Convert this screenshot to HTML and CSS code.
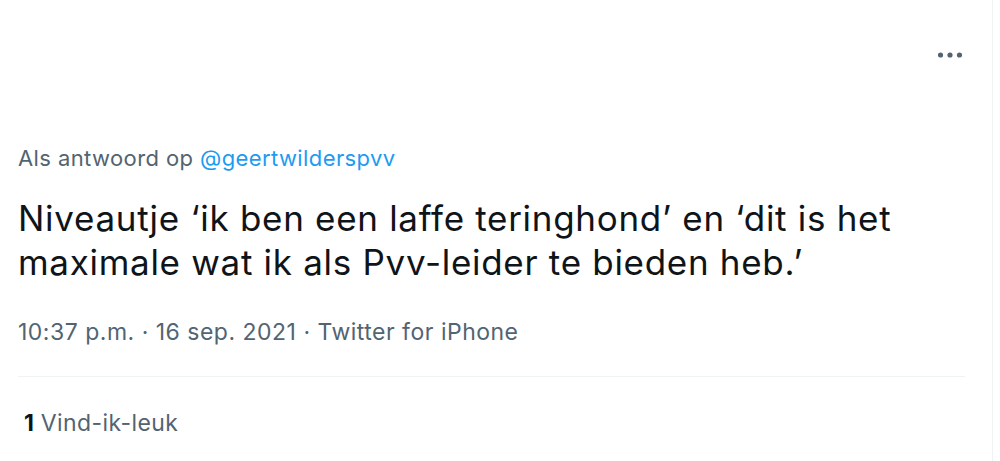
FILE: index.html
```html
<!DOCTYPE html>
<html>
<head>
<meta charset="utf-8">
<link rel="stylesheet" href="styles.css">
</head>
<body>
<div class="page">
  <div class="tweet">
    <div class="top">
      <div class="more" aria-label="Meer">
        <svg width="24" height="10" viewBox="0 0 24 10"><circle cx="2.5" cy="5" r="2.6" fill="#536471"/><circle cx="12" cy="5" r="2.6" fill="#536471"/><circle cx="21.5" cy="5" r="2.6" fill="#536471"/></svg>
      </div>
    </div>
    <div class="reply">Als antwoord op <span class="handle">@geertwilderspvv</span></div>
    <div class="text">Niveautje ‘ik ben een laffe teringhond’ en ‘dit is het maximale wat ik als Pvv-leider te bieden heb.’</div>
    <div class="meta">10:37 p.m. · 16 sep. 2021 · Twitter for iPhone</div>
    <div class="divider"></div>
    <div class="likes"><b>1</b> Vind-ik-leuk</div>
  </div>
  <div class="edge"></div>
</div>
</body>
</html>
```
FILE: styles.css
```css
html, body { margin: 0; padding: 0; background: #fff; }
body { font-family: Inter, "Noto Sans", sans-serif; color: #0f1419; }
.page { display: flex; width: 1000px; height: 461px; overflow: hidden; }
.tweet { width: 965px; padding-left: 18px; box-sizing: border-box; flex: none; }
.top { height: 144px; display: flex; justify-content: flex-end; }
.more { margin-top: 50px; margin-right: 3px; height: 10px; }
.more svg { display: block; }
.reply { font-size: 22px; letter-spacing: 0.4px; color: #536471; line-height: 28px; }
.handle { color: #1d9bf0; }
.text { font-size: 35px; letter-spacing: 0.7px; line-height: 44px; margin-top: 24px; width: 930px; }
.meta { font-size: 23px; letter-spacing: 0.5px; color: #536471; line-height: 28px; margin-top: 34px; }
.divider { height: 1px; background: #eff3f4; margin-top: 30px; }
.likes { font-size: 23px; letter-spacing: 0.4px; color: #536471; line-height: 28px; margin-top: 32px; padding-left: 6px; }
.likes b { color: #0f1419; font-weight: 700; letter-spacing: 0; }
.edge { width: 1px; height: 100%; background: #eff3f4; margin-left: 27px; }
```
